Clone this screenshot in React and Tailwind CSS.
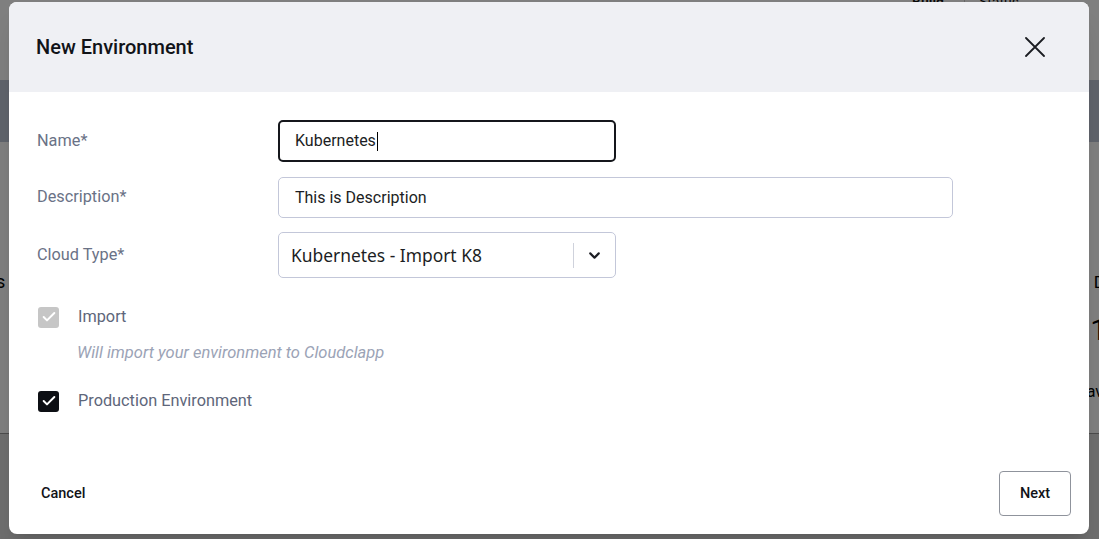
import { ChevronDown, Check } from "lucide-react";

const font = { fontFamily: "Roboto, 'Liberation Sans', sans-serif" };

function Backdrop() {
  return (
    <div className="absolute inset-0 bg-white">
      {/* underlying page, mostly hidden by the modal */}
      <div className="h-[80px] flex justify-end pr-[80px]">
        <span className="text-[14px] text-[#111] -mt-[8px] mr-[20px] font-semibold">Build</span>
        <span className="text-[14px] text-[#111] -mt-[8px] border-l border-[#ccc] pl-[14px]">Status</span>
      </div>
      <div className="h-[62px] bg-[#bec6d6]" />
      <div className="relative h-[291px]">
        <span className="absolute left-[-4px] top-[126px] text-[18px] text-black">s</span>
        <span className="absolute right-[-6px] top-[128px] text-[17px] text-black">D</span>
        <span className="absolute right-[-8px] top-[165px] text-[30px] text-black">1</span>
        <span className="absolute right-[-4px] top-[238px] text-[16px] text-black">av</span>
      </div>
      <div className="border-t border-[#999] h-full bg-[#dcdcdc]" />
      <div className="absolute inset-0 bg-black/50" />
    </div>
  );
}

function Checkbox({ checked, disabled }) {
  return (
    <div
      className={
        disabled
          ? "w-[21px] h-[21px] rounded-[3px] bg-[#c6c6c6] flex items-center justify-center"
          : "w-[21px] h-[21px] rounded-[3px] bg-[#0d0f14] flex items-center justify-center"
      }
    >
      {checked && <Check className="w-[16px] h-[16px] text-white" strokeWidth={3} />}
    </div>
  );
}

export default function App() {
  return (
    <div className="relative w-[1099px] h-[539px] overflow-hidden" style={font}>
      <Backdrop />

      <div className="absolute left-[9px] top-[2px] w-[1080px] h-[532px] bg-white rounded-[8px] shadow-xl overflow-hidden flex flex-col">
        {/* Header */}
        <div className="h-[90px] bg-[#eff0f4] flex items-center justify-between pl-[27px] pr-[44px]">
          <h2 className="text-[20px] font-medium text-[#111318]">New Environment</h2>
          <svg width="20" height="20" viewBox="0 0 20 20" className="text-[#1b1d22]">
            <path d="M1 1L19 19M19 1L1 19" stroke="currentColor" strokeWidth="1.8" strokeLinecap="round" />
          </svg>
        </div>

        {/* Body */}
        <div className="flex-1 pl-[28px] pt-[28px]">
          <div className="flex items-center h-[42px]">
            <label className="w-[241px] text-[16.3px] text-[#6a7286] pt-px">Name*</label>
            <div className="w-[338px] h-[42px] border-2 border-[#15171c] rounded-[5px] flex items-center pl-[15px] text-[16px] text-[#1c1e24]">
              Kubernetes
              <span className="inline-block w-px h-[19px] bg-black ml-px" />
            </div>
          </div>

          <div className="flex items-center h-[41px] mt-[15px]">
            <label className="w-[241px] text-[16.3px] text-[#6a7286]">Description*</label>
            <div className="w-[675px] h-[41px] border border-[#c3c7d9] rounded-[5px] flex items-center pl-[16px] text-[16px] text-[#1c1e24]">
              This is Description
            </div>
          </div>

          <div className="flex items-center h-[46px] mt-[14px]">
            <label className="w-[241px] text-[16.3px] text-[#6a7286]">Cloud Type*</label>
            <div className="w-[338px] h-[46px] border border-[#c3c7d9] rounded-[5px] flex items-center">
              <span
                className="flex-1 pl-[12px] text-[17.4px] text-[#1c1e24]"
                style={{ fontFamily: "'Noto Sans', 'Open Sans', sans-serif" }}
              >
                Kubernetes - Import K8
              </span>
              <span className="w-px h-[25px] bg-[#cfd2dc]" />
              <span className="w-[41px] flex justify-center">
                <ChevronDown className="w-[17px] h-[17px] text-[#1c1e24]" strokeWidth={3} />
              </span>
            </div>
          </div>

          <div className="flex items-center mt-[27px] ml-[1px]">
            <Checkbox checked disabled />
            <span className="ml-[19px] text-[16.3px] text-[#5e667a]">Import</span>
          </div>
          <p className="mt-[12px] ml-[40px] text-[16.5px] italic text-[#9ba3b6]">
            Will import your environment to Cloudclapp
          </p>

          <div className="flex items-center mt-[23px] ml-[1px]">
            <Checkbox checked />
            <span className="ml-[19px] text-[16.3px] text-[#5e667a]">Production Environment</span>
          </div>
        </div>

        {/* Footer */}
        <div className="flex items-center justify-between pl-[32px] pr-[18px] pb-[18px]">
          <button className="text-[14.5px] font-medium text-[#111318]">Cancel</button>
          <button className="w-[72px] h-[45px] border border-[#8f939c] rounded-[4px] text-[14.5px] font-medium text-[#111318]">
            Next
          </button>
        </div>
      </div>
    </div>
  );
}
